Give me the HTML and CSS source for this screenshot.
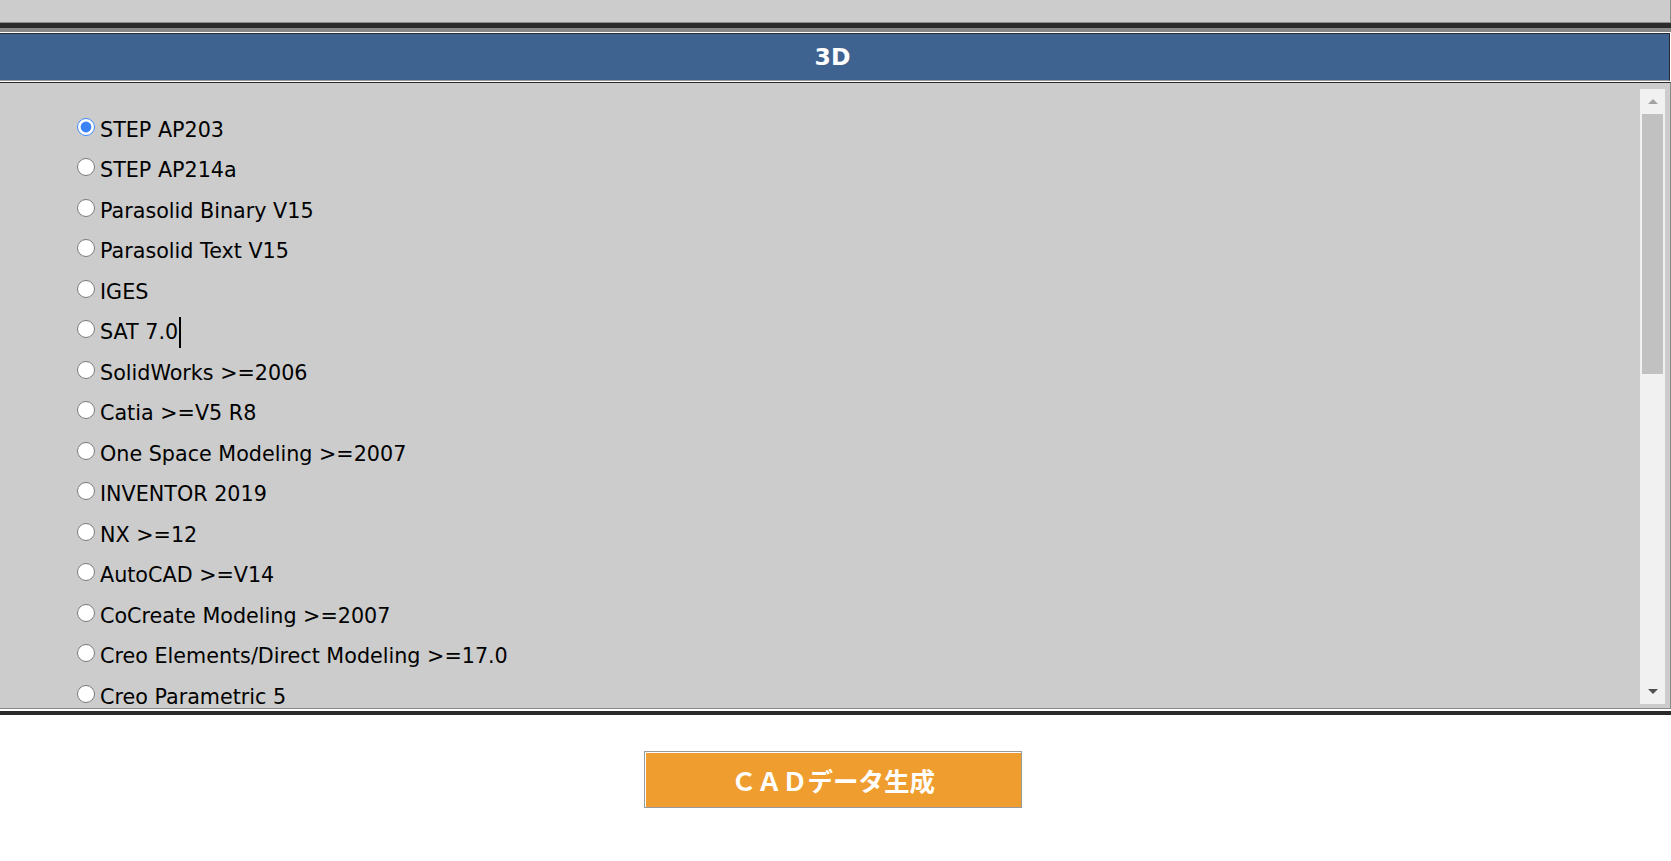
FILE: index.html
```html
<!DOCTYPE html>
<html lang="ja">
<head>
<meta charset="utf-8">
<title>CADデータ生成</title>
<link rel="stylesheet" href="styles.css">
</head>
<body>
<div class="prev-panel"></div>
<div class="divider"></div>
<section class="format-section">
  <div class="header-wrap"><h2 class="section-title">3D</h2></div>
  <div class="list-box">
    <div class="list-scroll">
      <label class="option"><input type="radio" name="fmt" checked>STEP AP203</label>
      <label class="option"><input type="radio" name="fmt">STEP AP214a</label>
      <label class="option"><input type="radio" name="fmt">Parasolid Binary V15</label>
      <label class="option"><input type="radio" name="fmt">Parasolid Text V15</label>
      <label class="option"><input type="radio" name="fmt">IGES</label>
      <label class="option"><input type="radio" name="fmt">SAT 7.0<span class="caret"></span></label>
      <label class="option"><input type="radio" name="fmt">SolidWorks &gt;=2006</label>
      <label class="option"><input type="radio" name="fmt">Catia &gt;=V5 R8</label>
      <label class="option"><input type="radio" name="fmt">One Space Modeling &gt;=2007</label>
      <label class="option"><input type="radio" name="fmt">INVENTOR 2019</label>
      <label class="option"><input type="radio" name="fmt">NX &gt;=12</label>
      <label class="option"><input type="radio" name="fmt">AutoCAD &gt;=V14</label>
      <label class="option"><input type="radio" name="fmt">CoCreate Modeling &gt;=2007</label>
      <label class="option"><input type="radio" name="fmt">Creo Elements/Direct Modeling &gt;=17.0</label>
      <label class="option"><input type="radio" name="fmt">Creo Parametric 5</label>
    </div>
    <div class="scrollbar">
      <div class="sb-btn"><span class="tri-up"></span></div>
      <div class="sb-track"><div class="sb-thumb"></div></div>
      <div class="sb-btn"><span class="tri-down"></span></div>
    </div>
  </div>
  <div class="bottom-band"></div>
</section>
<div class="actions"><button class="generate" type="button">ＣＡＤデータ生成</button></div>
</body>
</html>
```
FILE: styles.css
```css
html, body {
  margin: 0;
  padding: 0;
  background: #ffffff;
}
body {
  font-family: "DejaVu Sans", Verdana, sans-serif;
  color: #000;
}
.prev-panel {
  height: 22px;
  background: #cccccc;
  border-bottom: 1px solid #8a8a8a;
  border-right: 1px solid #8a8a8a;
}
.divider {
  height: 4px;
  background: #888888;
  border-top: 5px solid #2b2b2b;
}
.header-wrap {
  border-top: 1px solid #ffffff;
  border-bottom: 1px solid #ffffff;
  border-right: 1px solid #ffffff;
}
.section-title {
  margin: 0;
  height: 46px;
  line-height: 46px;
  padding-right: 4px;
  background: #3f6391;
  border-top: 1px solid #2b2b2b;
  border-bottom: 1px solid #9a9a9a;
  border-right: 1px solid #2b2b2b;
  color: #ffffff;
  font-size: 23.5px;
  font-weight: bold;
  text-align: center;
}
.list-box {
  display: flex;
  height: 615px;
  padding: 6px 5px 4px 0;
  background: #cccccc;
  border-top: 1px solid #2b2b2b;
  border-right: 1px solid #8a8a8a;
  border-bottom: 1px solid #8a8a8a;
  overflow: hidden;
}
.list-scroll {
  flex: 1;
  padding-top: 20.5px;
}
.option {
  display: block;
  height: 40.5px;
  line-height: 40.5px;
  font-size: 20.7px;
  white-space: nowrap;
}
.option input {
  width: 18px;
  height: 18px;
  margin: 8px 5px 0 77px;
  vertical-align: top;
  accent-color: #3b82f6;
}
.caret {
  display: inline-block;
  width: 2px;
  height: 31px;
  background: #000;
  margin-left: 1px;
  vertical-align: -8.5px;
}
.scrollbar {
  width: 25px;
  display: flex;
  flex-direction: column;
  background: #f1f1f1;
}
.sb-btn {
  height: 25px;
  display: flex;
  align-items: center;
  justify-content: center;
}
.tri-up {
  width: 0;
  height: 0;
  border-left: 5.5px solid transparent;
  border-right: 5.5px solid transparent;
  border-bottom: 5.5px solid #a3a3a3;
}
.tri-down {
  width: 0;
  height: 0;
  border-left: 5.5px solid transparent;
  border-right: 5.5px solid transparent;
  border-top: 5.5px solid #505050;
}
.sb-track {
  flex: 1;
  padding: 0 2px;
}
.sb-thumb {
  height: 260px;
  background: #c1c1c1;
}
.bottom-band {
  height: 4px;
  background: #2b2b2b;
  border-top: 2px solid #ffffff;
}
.actions {
  padding-top: 36px;
  padding-right: 5px;
}
.generate {
  display: block;
  width: 378px;
  height: 57px;
  margin: 0 auto;
  padding: 0;
  background: #f09d2f;
  border: 1px solid #9a9a9a;
  box-shadow: inset 1px 1px 0 #ffffff;
  color: #ffffff;
  font-family: "Noto Sans CJK JP", "DejaVu Sans", sans-serif;
  font-size: 25.5px;
  font-weight: bold;
  cursor: pointer;
}
```
